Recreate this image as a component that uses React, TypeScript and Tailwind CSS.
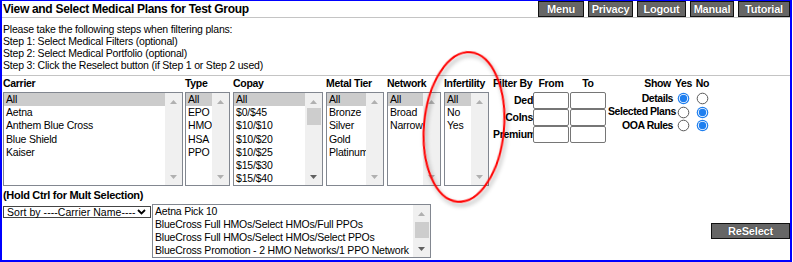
import React from "react";

function Tri({ up, color }: { up?: boolean; color: string }) {
  return (
    <svg width="7" height="4" viewBox="0 0 7 4" className="block">
      <polygon points={up ? "0,4 7,4 3.5,0" : "0,0 7,0 3.5,4"} fill={color} />
    </svg>
  );
}

function ScrollBar({ thumb, active }: { thumb?: string; active?: boolean }) {
  return (
    <div className="relative w-[17px] shrink-0 bg-[#f0f0f0] flex flex-col justify-between">
      <div className="h-[17px] flex items-center justify-center">
        <Tri up color="#b0b0b0" />
      </div>
      {thumb && <div className={`absolute left-[2px] right-[1px] bg-[#cdcdcd] ${thumb}`} />}
      <div className="h-[17px] flex items-center justify-center">
        <Tri color={active ? "#606060" : "#b0b0b0"} />
      </div>
    </div>
  );
}

function ListBox({
  items,
  size,
  thumb,
  active,
  hl = true,
  row = "h-[13.2px] leading-[13.2px]",
}: {
  items: string[];
  size: string;
  thumb?: string;
  active?: boolean;
  hl?: boolean;
  row?: string;
}) {
  return (
    <div className={`${size} border border-[#828790] bg-white flex`}>
      <div className="flex-1 min-w-0 overflow-hidden">
        {items.map((t, i) => (
          <div
            key={i}
            className={`${row} pl-[2px] whitespace-nowrap ${i === 0 && hl ? "bg-[#cccccc]" : ""}`}
          >
            {t}
          </div>
        ))}
      </div>
      <ScrollBar thumb={thumb} active={active} />
    </div>
  );
}

function Radio({ checked }: { checked?: boolean }) {
  return (
    <svg width="13" height="13" viewBox="0 0 13 13" className="block">
      {checked ? (
        <>
          <circle cx="6.5" cy="6.5" r="5.8" fill="#1f7fef" />
          <circle cx="6.5" cy="6.5" r="4.6" fill="#ffffff" />
          <circle cx="6.5" cy="6.5" r="3.7" fill="#1f7fef" />
        </>
      ) : (
        <circle cx="6.5" cy="6.5" r="5.3" fill="#ffffff" stroke="#5a5a5a" strokeWidth="1" />
      )}
    </svg>
  );
}

function TopBtn({ label, w }: { label: string; w: string }) {
  return (
    <div
      className={`${w} h-[16px] bg-[#666666] border border-[#111111] text-white font-bold text-[11px] leading-[14px] text-center [text-shadow:0_0_1px_#222]`}
    >
      {label}
    </div>
  );
}

const lbl = "font-bold text-[10.5px] tracking-[-0.3px]";

export default function App() {
  return (
    <div className="w-[793px] h-[262px] bg-white">
      <div className="relative w-[792px] h-[262px] border-[#0000ff] border-l-2 border-r-2 border-t border-b-2 bg-white overflow-hidden font-['Liberation_Sans',Arial,sans-serif] text-black text-[10.5px] tracking-[-0.2px]">
        {/* header */}
        <div className="flex h-[16px] pl-px">
          <div className="font-bold text-[12px] tracking-[-0.3px] leading-[16px]">
            View and Select Medical Plans for Test Group
          </div>
          <div className="ml-auto flex gap-[4px] tracking-[-0.2px]">
            <TopBtn label="Menu" w="w-[46px]" />
            <TopBtn label="Privacy" w="w-[45px]" />
            <TopBtn label="Logout" w="w-[49px]" />
            <TopBtn label="Manual" w="w-[44px]" />
            <TopBtn label="Tutorial" w="w-[52px]" />
          </div>
        </div>
        <div className="h-px bg-[#c4c4c4]" />

        {/* instructions */}
        <div className="mt-[5px] pl-px leading-[12px]">
          <div>Please take the following steps when filtering plans:</div>
          <div>Step 1: Select Medical Filters (optional)</div>
          <div>Step 2: Select Medical Portfolio (optional)</div>
          <div>Step 3: Click the Reselect button (if Step 1 or Step 2 used)</div>
        </div>
        <div className="mt-[4px] h-px bg-[#c4c4c4]" />

        {/* filter row */}
        <div className="flex pl-px">
          <div className="w-[182px]">
            <div className={`h-[16px] leading-[14px] ${lbl}`}>Carrier</div>
            <ListBox
              size="w-[180px] h-[94px]"
              items={["All", "Aetna", "Anthem Blue Cross", "Blue Shield", "Kaiser"]}
            />
          </div>
          <div className="w-[48px]">
            <div className={`h-[16px] leading-[14px] ${lbl}`}>Type</div>
            <ListBox size="w-[45px] h-[94px]" items={["All", "EPO", "HMO", "HSA", "PPO"]} />
          </div>
          <div className="w-[93px]">
            <div className={`h-[16px] leading-[14px] ${lbl}`}>Copay</div>
            <ListBox
              size="w-[90px] h-[94px]"
              items={["All", "$0/$45", "$10/$10", "$10/$20", "$10/$25", "$15/$30", "$15/$40"]}
              thumb="top-[15px] h-[17px]"
              active
            />
          </div>
          <div className="w-[61px]">
            <div className={`h-[16px] leading-[14px] ${lbl}`}>Metal Tier</div>
            <ListBox size="w-[58px] h-[94px]" items={["All", "Bronze", "Silver", "Gold", "Platinum"]} />
          </div>
          <div className="w-[57px]">
            <div className={`h-[16px] leading-[14px] ${lbl}`}>Network</div>
            <ListBox size="w-[54px] h-[94px]" items={["All", "Broad", "Narrow"]} />
          </div>
          <div className="w-[49px]">
            <div className={`h-[16px] leading-[14px] ${lbl}`}>Infertility</div>
            <ListBox size="w-[45px] h-[94px]" items={["All", "No", "Yes"]} />
          </div>

          {/* filter by */}
          <div className="w-[115px]">
            <div className={`h-[16px] leading-[14px] flex ${lbl}`}>
              <span className="w-[40px] whitespace-nowrap">Filter By</span>
              <span className="w-[36px] text-center">From</span>
              <span className="w-[36px] text-center ml-px">To</span>
            </div>
            {["Ded", "CoIns", "Premium"].map((l) => (
              <div key={l} className="flex items-center h-[17px]">
                <span className={`w-[40px] text-right whitespace-nowrap ${lbl}`}>{l}</span>
                <div className="w-[36px] h-[17px] border border-[#767676] rounded-[2px] bg-white" />
                <div className="ml-px w-[36px] h-[17px] border border-[#767676] rounded-[2px] bg-white" />
              </div>
            ))}
          </div>

          {/* show */}
          <div>
            <div className={`h-[16px] leading-[14px] flex ${lbl}`}>
              <span className="w-[66px] text-right pr-[3px]">Show</span>
              <span className="w-[19px] text-center">Yes</span>
              <span className="w-[19px] text-center">No</span>
            </div>
            {[
              ["Details", true],
              ["Selected Plans", false],
              ["OOA Rules", false],
            ].map(([l, yes]) => (
              <div key={l as string} className="flex items-center h-[13.5px]">
                <span className="w-[66px] text-right whitespace-nowrap font-bold text-[10.5px] tracking-[-0.45px] pr-px">
                  {l as string}
                </span>
                <span className="w-[19px] flex justify-center">
                  <Radio checked={yes as boolean} />
                </span>
                <span className="w-[19px] flex justify-center">
                  <Radio checked={!(yes as boolean)} />
                </span>
              </div>
            ))}
          </div>
        </div>

        {/* hold ctrl */}
        <div className={`mt-[3px] pl-px leading-[12px] ${lbl} text-[11px]`}>(Hold Ctrl for Mult Selection)</div>

        {/* bottom row */}
        <div className="flex items-start pl-px">
          <div className="mt-[5px] w-[148px] h-[12px] border border-[#444] bg-white flex items-center pl-[3px] leading-[10px] text-[10.5px] tracking-[0.05px]">
            <span className="whitespace-nowrap">Sort by ----Carrier Name----</span>
            <svg width="9" height="6" viewBox="0 0 9 6" className="ml-auto mr-[4px] shrink-0">
              <polyline points="1,1 4.5,4.5 8,1" fill="none" stroke="#000" strokeWidth="1.8" />
            </svg>
          </div>
          <div className="mt-[3px] ml-[1px]">
            <ListBox
              size="w-[279px] h-[54px]"
              hl={false}
              row="h-[13px] leading-[13px] pl-[2px]"
              items={[
                "Aetna Pick 10",
                "BlueCross Full HMOs/Select HMOs/Full PPOs",
                "BlueCross Full HMOs/Select HMOs/Select PPOs",
                "BlueCross Promotion - 2 HMO Networks/1 PPO Network",
              ]}
              thumb="top-[17px] h-[16px]"
              active
            />
          </div>
          <div className="ml-auto mt-[22px]">
            <TopBtn label="ReSelect" w="w-[79px]" />
          </div>
        </div>

        {/* red annotation ellipse */}
        <svg
          className="absolute left-[-2px] top-[-1px] pointer-events-none"
          width="792"
          height="262"
          viewBox="0 0 792 262"
        >
          <defs>
            <filter id="sh" x="-30%" y="-30%" width="160%" height="160%">
              <feDropShadow dx="2" dy="3" stdDeviation="2" floodColor="#000" floodOpacity="0.35" />
            </filter>
          </defs>
          <ellipse
            cx="464"
            cy="127"
            rx="40"
            ry="75"
            transform="rotate(5 464 127)"
            fill="none"
            stroke="#ff0000"
            strokeWidth="2"
            filter="url(#sh)"
          />
        </svg>
      </div>
    </div>
  );
}
